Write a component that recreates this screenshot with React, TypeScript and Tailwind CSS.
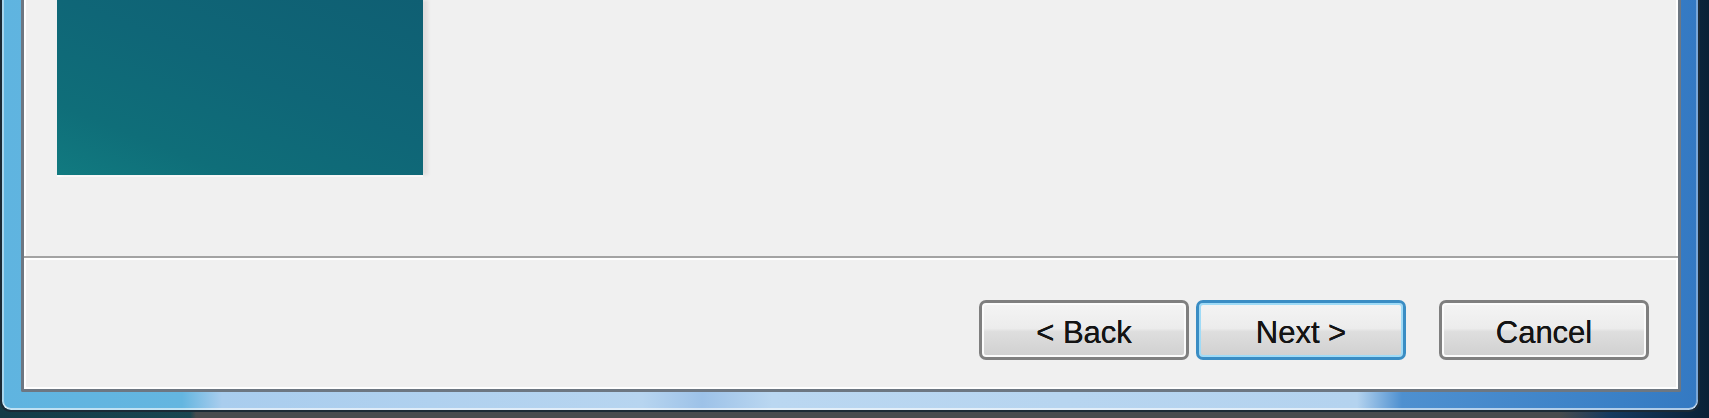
import React from "react";

const btn =
  "flex items-center justify-center w-[210px] h-[60px] rounded-[7px] pt-[4px] text-[31px] leading-none text-[#141414] [text-shadow:0_0_0.6px_#000] bg-[linear-gradient(to_bottom,#f4f4f4_0%,#ececec_47%,#dedede_53%,#d0d0d0_100%)]";

function WizardButton({ label, isDefault }: { label: string; isDefault?: boolean }) {
  return (
    <button
      className={
        isDefault
          ? `${btn} border-[3px] border-[#3a8dc4] shadow-[inset_0_0_0_2px_#9fdbf7]`
          : `${btn} border-[3px] border-[#7f7f7f] shadow-[inset_0_0_0_2px_#fbfbfb]`
      }
    >
      {label}
    </button>
  );
}

export default function App() {
  return (
    <div className="w-[1709px] h-[418px] overflow-hidden flex flex-col font-['Liberation_Sans',Arial,sans-serif] bg-[linear-gradient(to_right,#143b47_0px,#1a4651_190px,#474b4e_196px,#474b4e_1560px,#153a5f_1610px,#0a2137_100%)]">
      {/* window frame: glass border around the dialog body */}
      <div className="w-[1700px] h-[412px] shrink-0 flex rounded-b-[11px] border-x-2 border-b-2 border-[#1b2a36] pl-[19px] pr-[17px] pb-[18px] shadow-[inset_2px_0_0_rgba(255,255,255,0.45),inset_-2px_0_0_rgba(255,255,255,0.35),inset_0_-2px_0_rgba(255,255,255,0.6)] bg-[linear-gradient(to_right,#5fb4e0_0px,#64b6e0_180px,#a9cdee_220px,#b7d5f0_640px,#9dc2e8_700px,#bad7f1_770px,#b4d3ef_1355px,#4e90d0_1400px,#3a80c6_1620px,#3479c2_100%)]">
        <div className="flex-1 flex flex-col bg-[#f0f0f0] border-x-[3px] border-b-[3px] border-[#6d7782] rounded-b-[2px] shadow-[inset_2px_0_0_#ffffff,inset_-2px_0_0_#ffffff,inset_0_-2px_0_#ffffff]">
          {/* upper area with wizard side image */}
          <div className="h-[256px] shrink-0 pl-[33px]">
            <div className="w-[366px] h-[175px] shadow-[5px_0_3px_rgba(120,100,100,0.12),0_2px_0_#fcfcfc] bg-[linear-gradient(22deg,#117a80_0%,#0f6e79_22%,#0f6677_55%,#0f5f73_100%)]" />
          </div>
          <div className="h-[2px] shrink-0 bg-[#a3a3a3]" />
          <div className="h-[2px] shrink-0 bg-[#ffffff]" />
          {/* button row */}
          <div className="flex-1 flex justify-end items-start pt-[40px] pr-[29px]">
            <WizardButton label="< Back" />
            <div className="w-[7px]" />
            <WizardButton label="Next >" isDefault />
            <div className="w-[33px]" />
            <WizardButton label="Cancel" />
          </div>
        </div>
      </div>
    </div>
  );
}
